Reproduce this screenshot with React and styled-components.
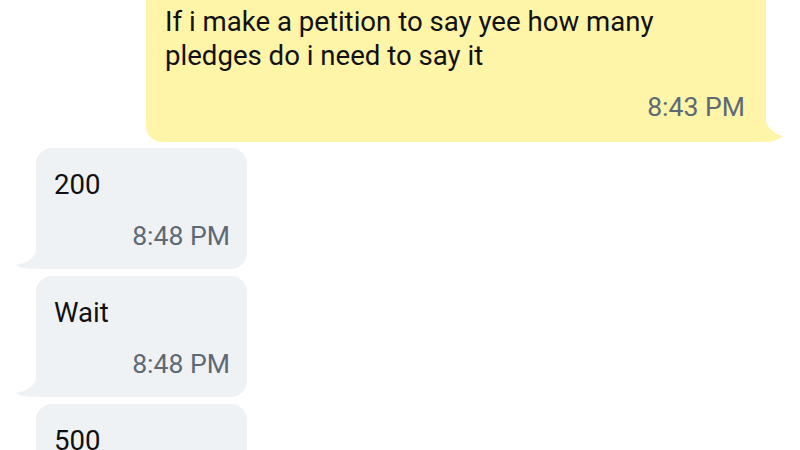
import React from "react";
import styled, { createGlobalStyle } from "styled-components";

const GlobalStyle = createGlobalStyle`
  html, body {
    margin: 0;
    padding: 0;
    background: #ffffff;
    overflow: hidden;
  }
  body {
    font-family: Roboto, "Noto Sans", "Liberation Sans", sans-serif;
  }
`;

const Screen = styled.div`
  width: 800px;
  height: 450px;
  overflow: hidden;
  background: #ffffff;
`;

const Thread = styled.div`
  display: flex;
  flex-direction: column;
  gap: 7px;
  margin-top: -15px;
  padding: 0 34px 0 36px;
`;

const Bubble = styled.div`
  position: relative;
  box-sizing: border-box;
  align-self: ${({ $out }) => ($out ? "flex-end" : "flex-start")};
  width: ${({ $out }) => ($out ? "620px" : "211px")};
  padding: ${({ $out }) => ($out ? "20px 21px 18px 19px" : "20px 17px 16px 18px")};
  background: ${({ $out }) => ($out ? "#fff5a8" : "#eff2f5")};
  border-radius: ${({ $out }) => ($out ? "16px 16px 4px 16px" : "16px 16px 16px 4px")};
  margin-bottom: ${({ $out }) => ($out ? "-1px" : "0")};
`;

const Body = styled.div`
  max-width: ${({ $out }) => ($out ? "520px" : "none")};
  font-size: 27.6px;
  line-height: 34px;
  color: #111111;
`;

const Time = styled.div`
  margin-top: 17px;
  text-align: right;
  font-size: 26.6px;
  line-height: 34px;
  color: #5d6975;
`;

const Tail = styled.svg`
  position: absolute;
  bottom: 0;
  ${({ $out }) => ($out ? "left: calc(100% - 1px);" : "right: calc(100% - 1px);")}
`;

function BubbleTail({ out }) {
  if (out) {
    return (
      <Tail $out width="19" height="26" viewBox="0 0 19 26">
        <path d="M0 0 C1 10 6 17 18 20 C13 24 6 26 0 26 Z" fill="#fff5a8" />
      </Tail>
    );
  }
  return (
    <Tail width="22" height="22" viewBox="0 0 22 22">
      <path d="M22 0 C21 10 14 16 0 18 C6 21 14 22 22 22 Z" fill="#eff2f5" />
    </Tail>
  );
}

function Message({ out, text, time }) {
  return (
    <Bubble $out={out}>
      <Body $out={out}>{text}</Body>
      {time && <Time>{time}</Time>}
      {time && <BubbleTail out={out} />}
    </Bubble>
  );
}

const messages = [
  {
    out: true,
    text: "If i make a petition to say yee how many pledges do i need to say it",
    time: "8:43 PM",
  },
  { out: false, text: "200", time: "8:48 PM" },
  { out: false, text: "Wait", time: "8:48 PM" },
  { out: false, text: "500", time: "8:48 PM" },
];

export default function App() {
  return (
    <>
      <GlobalStyle />
      <Screen>
        <Thread>
          {messages.map((m, i) => (
            <Message key={i} {...m} />
          ))}
        </Thread>
      </Screen>
    </>
  );
}
